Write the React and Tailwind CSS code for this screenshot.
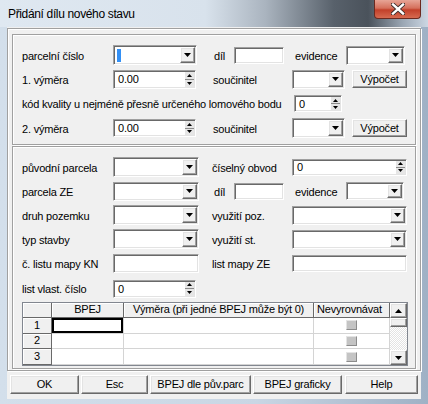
import React from 'react';

const sunken =
  'bg-white border border-t-[#a0a0a0] border-l-[#a0a0a0] border-r-white border-b-white shadow-[inset_1px_1px_0_#696969,inset_-1px_-1px_0_#e3e3e3]';
const raised =
  'bg-[#f0f0f0] border border-t-white border-l-white border-r-[#696969] border-b-[#696969] shadow-[inset_-1px_-1px_0_#a0a0a0,inset_1px_1px_0_#e3e3e3]';
const etched = 'border border-[#a0a0a0] shadow-[inset_1px_1px_0_#fff,1px_1px_0_#fff]';

const Down = ({ w = 7, h = 4 }) => (
  <svg width={w} height={h} viewBox="0 0 7 4">
    <path d="M0 0h7L3.5 4z" fill="#000" />
  </svg>
);
const Up = ({ w = 7, h = 4 }) => (
  <svg width={w} height={h} viewBox="0 0 7 4">
    <path d="M0 4h7L3.5 0z" fill="#000" />
  </svg>
);

const Label = ({ w, children, className = '' }) => (
  <div className={`shrink-0 pt-[2px] whitespace-nowrap ${className}`} style={{ width: w }}>
    {children}
  </div>
);

const Combo = ({ w, h = 20, caret = false }) => (
  <div className={`flex shrink-0 ${sunken}`} style={{ width: w, height: h }}>
    <div className="flex-1 flex items-center pl-[3px]">
      {caret && <div className="w-[4px] h-[13px] bg-[#3390f5]" />}
    </div>
    <div className={`w-[15px] my-[1px] mr-[1px] flex items-center justify-center ${raised}`}>
      <Down />
    </div>
  </div>
);

const Edit = ({ w, h = 18 }) => <div className={`shrink-0 ${sunken}`} style={{ width: w, height: h }} />;

const Spin = ({ w, h = 18, value }) => (
  <div className={`flex shrink-0 ${sunken}`} style={{ width: w, height: h }}>
    <div className="flex-1 flex items-center pl-[4px] pt-[1px]">{value}</div>
    <div className="w-[9px] my-[1px] mr-[1px] flex flex-col bg-[#e6e6e6]">
      <div className="flex-1 flex items-center justify-center border-b border-[#8a8a8a]">
        <Up w={5} h={3} />
      </div>
      <div className="flex-1 flex items-center justify-center">
        <Down w={5} h={3} />
      </div>
    </div>
  </div>
);

const Button = ({ w, h = 19, children, className = '' }) => (
  <div
    className={`shrink-0 flex items-center justify-center ${raised} ${className}`}
    style={{ width: w, height: h }}
  >
    {children}
  </div>
);

const Fixed = ({ w, children, className = '' }) => (
  <div
    className={`shrink-0 h-full flex items-center justify-center bg-[#f0f0f0] border-r border-b border-[#696969] shadow-[inset_1px_1px_0_#fff] ${className}`}
    style={{ width: w }}
  >
    {children}
  </div>
);

const Cell = ({ w, children, className = '' }) => (
  <div
    className={`shrink-0 h-full flex items-center justify-center bg-white border-r border-b border-[#d4d4d4] ${className}`}
    style={{ width: w }}
  >
    {children}
  </div>
);

const Check = () => <div className="w-[11px] h-[10px] ml-[32px] bg-[#c4c4c4] border border-t-[#e4e4e4] border-l-[#e4e4e4] border-r-[#8c8c8c] border-b-[#8c8c8c]" />;

const Grid = () => (
  <div className="mt-[4px] w-[386px] h-[64px] flex border border-[#828790] bg-white">
    <div className="w-[367px] flex flex-col">
      <div className="h-[15px] flex">
        <Fixed w={29} />
        <Fixed w={72}>BPEJ</Fixed>
        <Fixed w={190}>Výměra (při jedné BPEJ může být 0)</Fixed>
        <Fixed w={76} className="justify-start pl-[3px]">Nevyrovnávat</Fixed>
      </div>
      {[1, 2, 3].map((n) => (
        <div key={n} className="h-[16px] flex">
          <Fixed w={29}>{n}</Fixed>
          <Cell w={72} className={n === 1 ? 'shadow-[inset_0_0_0_2px_#000] border-[#000]' : ''} />
          <Cell w={190} />
          <Cell w={76} className="justify-start">
            <Check />
          </Cell>
        </div>
      ))}
    </div>
    <div className="w-[17px] flex flex-col bg-[repeating-conic-gradient(#fff_0%_25%,#e3e3e3_0%_50%)] bg-[length:2px_2px]">
      <div className={`h-[15px] flex items-center justify-center ${raised}`}>
        <Up />
      </div>
      <div className={`h-[9px] ${raised}`} />
      <div className="flex-1" />
      <div className={`h-[15px] flex items-center justify-center ${raised}`}>
        <Down />
      </div>
    </div>
  </div>
);

export default function App() {
  return (
    <div className="w-[428px] h-[404px] overflow-hidden relative bg-[linear-gradient(90deg,#d3dfeb_0%,#c9d6e4_60%,#9fb1c5_100%)] font-['Liberation_Sans',Arial,sans-serif] text-[11px] tracking-[-0.2px] text-black leading-none">
      {/* title bar */}
      <div className="h-[27px] flex items-center pl-[8px] pt-[1px] bg-[linear-gradient(90deg,#dfe8f1_0%,#d8e2ec_48%,#aab4bf_62%,#58616b_78%,#4a525b_86%,#9aa6b3_94%,#ccd7e3_100%)]">
        <span className="text-[12px] tracking-[-0.35px]">Přidání dílu nového stavu</span>
      </div>
      <div className="absolute top-0 right-[7px] w-[47px] h-[19px] rounded-b-[4px] border border-t-0 border-[#6b2a20] bg-[linear-gradient(180deg,#e7a596_0%,#d5705c_45%,#c2402a_55%,#d66a50_100%)] flex items-center justify-center">
        <svg width="14" height="12" viewBox="0 0 14 12">
          <path d="M2 1.5l10 9M12 1.5l-10 9" stroke="#3a2a28" strokeWidth="4.2" strokeLinecap="square" />
          <path d="M2 1.5l10 9M12 1.5l-10 9" stroke="#fff" strokeWidth="2.4" strokeLinecap="square" />
        </svg>
      </div>

      {/* client area */}
      <div className="mx-[7px] h-[372px] bg-[#f0f0f0] flex flex-col">
        <div className={`mt-[1px] h-[343px] ${etched} px-[4px] pt-[5px] flex flex-col`}>
          {/* group 1 */}
          <div className={`h-[111px] ${etched} pl-[9px] pt-[10px] flex flex-col`}>
            <div className="h-[20px] flex items-center">
              <Label w={91}>parcelní číslo</Label>
              <Combo w={84} caret />
              <Label w={20} className="ml-[17px]">díl</Label>
              <Edit w={50} h={17} />
              <Label w={62} className="pl-[11px]">evidence</Label>
              <Combo w={59} h={19} />
            </div>
            <div className="mt-[4px] h-[20px] flex items-center">
              <Label w={91}>1. výměra</Label>
              <Spin w={83} h={19} value="0.00" />
              <Label w={79} className="ml-[17px]">součinitel</Label>
              <Combo w={53} h={19} />
              <Button w={55} h={18} className="ml-[7px]">Výpočet</Button>
            </div>
            <div className="mt-[5px] h-[19px] flex items-center">
              <Label w={272}>kód kvality u nejméně přesně určeného lomového bodu</Label>
              <Spin w={48} h={17} value="0" />
            </div>
            <div className="mt-[5px] h-[20px] flex items-center">
              <Label w={91}>2. výměra</Label>
              <Spin w={83} h={18} value="0.00" />
              <Label w={79} className="ml-[17px]">součinitel</Label>
              <Combo w={53} h={20} />
              <Button w={55} h={18} className="ml-[7px]">Výpočet</Button>
            </div>
          </div>

          {/* group 2 */}
          <div className={`mt-[1px] h-[223px] ${etched} pl-[9px] pt-[10px] flex flex-col`}>
            <div className="h-[20px] flex items-center">
              <Label w={91}>původní parcela</Label>
              <Combo w={86} />
              <Label w={80} className="ml-[13px]">číselný obvod</Label>
              <Spin w={115} h={17} value="0" />
            </div>
            <div className="mt-[4px] h-[20px] flex items-center">
              <Label w={91}>parcela ZE</Label>
              <Combo w={86} h={19} />
              <Label w={20} className="ml-[15px]">díl</Label>
              <Edit w={50} h={17} />
              <Label w={62} className="pl-[11px]">evidence</Label>
              <Combo w={58} h={18} />
            </div>
            <div className="mt-[4px] h-[20px] flex items-center">
              <Label w={91}>druh pozemku</Label>
              <Combo w={86} />
              <Label w={80} className="ml-[13px]">využití poz.</Label>
              <Combo w={115} h={19} />
            </div>
            <div className="mt-[4px] h-[20px] flex items-center">
              <Label w={91}>typ stavby</Label>
              <Combo w={86} />
              <Label w={80} className="ml-[13px]">využití st.</Label>
              <Combo w={115} h={19} />
            </div>
            <div className="mt-[4px] h-[20px] flex items-center">
              <Label w={91}>č. listu mapy KN</Label>
              <Edit w={86} h={19} />
              <Label w={80} className="ml-[13px]">list mapy ZE</Label>
              <Edit w={115} h={17} />
            </div>
            <div className="mt-[6px] h-[19px] flex items-center">
              <Label w={91}>list vlast. číslo</Label>
              <Spin w={83} h={18} value="0" />
            </div>
            <Grid />
          </div>
        </div>

        {/* buttons */}
        <div className="mt-[4px] ml-[3px] flex">
          <Button w={69}>OK</Button>
          <Button w={67} className="ml-[2px]">Esc</Button>
          <Button w={101} className="ml-[2px]">BPEJ dle pův.parc</Button>
          <Button w={89} className="ml-[2px]">BPEJ graficky</Button>
          <Button w={73} className="ml-[3px]">Help</Button>
        </div>
      </div>
    </div>
  );
}
